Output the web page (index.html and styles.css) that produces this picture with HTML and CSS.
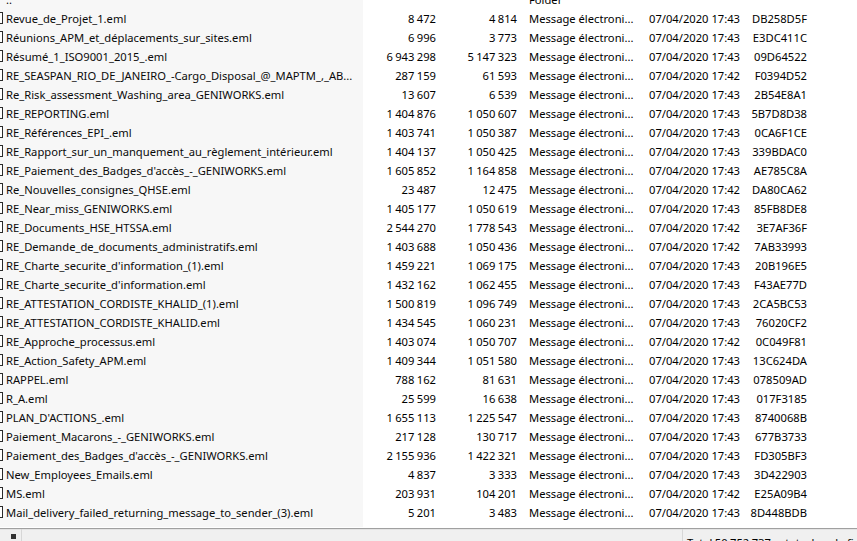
FILE: index.html
```html
<!DOCTYPE html>
<html lang="fr">
<head>
<meta charset="utf-8">
<title>Archive</title>
<link rel="stylesheet" href="styles.css">
</head>
<body>
<div class="window">
  <div class="list">
    <div class="row up"><span class="name"><svg class="folder" width="5" height="6" viewBox="0 0 5 6"><rect x="0" y="0" width="4" height="5" fill="#e8b83a"/></svg>..</span><span class="num"></span><span class="num"></span><span class="txt">Folder</span><span class="txt"></span><span class="crc"></span></div>
    <div class="row"><span class="name"><i class="file"></i>Revue_de_Projet_1.eml</span><span class="num">8 472</span><span class="num">4 814</span><span class="txt">Message électroni...</span><span class="txt">07/04/2020 17:43</span><span class="crc">DB258D5F</span></div>
    <div class="row"><span class="name"><i class="file"></i>Réunions_APM_et_déplacements_sur_sites.eml</span><span class="num">6 996</span><span class="num">3 773</span><span class="txt">Message électroni...</span><span class="txt">07/04/2020 17:43</span><span class="crc">E3DC411C</span></div>
    <div class="row"><span class="name"><i class="file"></i>Résumé_1_ISO9001_2015_.eml</span><span class="num">6 943 298</span><span class="num">5 147 323</span><span class="txt">Message électroni...</span><span class="txt">07/04/2020 17:43</span><span class="crc">09D64522</span></div>
    <div class="row"><span class="name"><i class="file"></i>RE_SEASPAN_RIO_DE_JANEIRO_-Cargo_Disposal_@_MAPTM_,_AB...</span><span class="num">287 159</span><span class="num">61 593</span><span class="txt">Message électroni...</span><span class="txt">07/04/2020 17:42</span><span class="crc">F0394D52</span></div>
    <div class="row"><span class="name"><i class="file"></i>Re_Risk_assessment_Washing_area_GENIWORKS.eml</span><span class="num">13 607</span><span class="num">6 539</span><span class="txt">Message électroni...</span><span class="txt">07/04/2020 17:43</span><span class="crc">2B54E8A1</span></div>
    <div class="row"><span class="name"><i class="file"></i>RE_REPORTING.eml</span><span class="num">1 404 876</span><span class="num">1 050 607</span><span class="txt">Message électroni...</span><span class="txt">07/04/2020 17:43</span><span class="crc">5B7D8D38</span></div>
    <div class="row"><span class="name"><i class="file"></i>RE_Références_EPI_.eml</span><span class="num">1 403 741</span><span class="num">1 050 387</span><span class="txt">Message électroni...</span><span class="txt">07/04/2020 17:43</span><span class="crc">0CA6F1CE</span></div>
    <div class="row"><span class="name"><i class="file"></i>RE_Rapport_sur_un_manquement_au_règlement_intérieur.eml</span><span class="num">1 404 137</span><span class="num">1 050 425</span><span class="txt">Message électroni...</span><span class="txt">07/04/2020 17:43</span><span class="crc">339BDAC0</span></div>
    <div class="row"><span class="name"><i class="file"></i>RE_Paiement_des_Badges_d'accès_-_GENIWORKS.eml</span><span class="num">1 605 852</span><span class="num">1 164 858</span><span class="txt">Message électroni...</span><span class="txt">07/04/2020 17:43</span><span class="crc">AE785C8A</span></div>
    <div class="row"><span class="name"><i class="file"></i>Re_Nouvelles_consignes_QHSE.eml</span><span class="num">23 487</span><span class="num">12 475</span><span class="txt">Message électroni...</span><span class="txt">07/04/2020 17:42</span><span class="crc">DA80CA62</span></div>
    <div class="row"><span class="name"><i class="file"></i>RE_Near_miss_GENIWORKS.eml</span><span class="num">1 405 177</span><span class="num">1 050 619</span><span class="txt">Message électroni...</span><span class="txt">07/04/2020 17:43</span><span class="crc">85FB8DE8</span></div>
    <div class="row"><span class="name"><i class="file"></i>RE_Documents_HSE_HTSSA.eml</span><span class="num">2 544 270</span><span class="num">1 778 543</span><span class="txt">Message électroni...</span><span class="txt">07/04/2020 17:42</span><span class="crc">3E7AF36F</span></div>
    <div class="row"><span class="name"><i class="file"></i>RE_Demande_de_documents_administratifs.eml</span><span class="num">1 403 688</span><span class="num">1 050 436</span><span class="txt">Message électroni...</span><span class="txt">07/04/2020 17:42</span><span class="crc">7AB33993</span></div>
    <div class="row"><span class="name"><i class="file"></i>RE_Charte_securite_d'information_(1).eml</span><span class="num">1 459 221</span><span class="num">1 069 175</span><span class="txt">Message électroni...</span><span class="txt">07/04/2020 17:43</span><span class="crc">20B196E5</span></div>
    <div class="row"><span class="name"><i class="file"></i>RE_Charte_securite_d'information.eml</span><span class="num">1 432 162</span><span class="num">1 062 455</span><span class="txt">Message électroni...</span><span class="txt">07/04/2020 17:43</span><span class="crc">F43AE77D</span></div>
    <div class="row"><span class="name"><i class="file"></i>RE_ATTESTATION_CORDISTE_KHALID_(1).eml</span><span class="num">1 500 819</span><span class="num">1 096 749</span><span class="txt">Message électroni...</span><span class="txt">07/04/2020 17:43</span><span class="crc">2CA5BC53</span></div>
    <div class="row"><span class="name"><i class="file"></i>RE_ATTESTATION_CORDISTE_KHALID.eml</span><span class="num">1 434 545</span><span class="num">1 060 231</span><span class="txt">Message électroni...</span><span class="txt">07/04/2020 17:43</span><span class="crc">76020CF2</span></div>
    <div class="row"><span class="name"><i class="file"></i>RE_Approche_processus.eml</span><span class="num">1 403 074</span><span class="num">1 050 707</span><span class="txt">Message électroni...</span><span class="txt">07/04/2020 17:42</span><span class="crc">0C049F81</span></div>
    <div class="row"><span class="name"><i class="file"></i>RE_Action_Safety_APM.eml</span><span class="num">1 409 344</span><span class="num">1 051 580</span><span class="txt">Message électroni...</span><span class="txt">07/04/2020 17:43</span><span class="crc">13C624DA</span></div>
    <div class="row"><span class="name"><i class="file"></i>RAPPEL.eml</span><span class="num">788 162</span><span class="num">81 631</span><span class="txt">Message électroni...</span><span class="txt">07/04/2020 17:43</span><span class="crc">078509AD</span></div>
    <div class="row"><span class="name"><i class="file"></i>R_A.eml</span><span class="num">25 599</span><span class="num">16 638</span><span class="txt">Message électroni...</span><span class="txt">07/04/2020 17:43</span><span class="crc">017F3185</span></div>
    <div class="row"><span class="name"><i class="file"></i>PLAN_D'ACTIONS_.eml</span><span class="num">1 655 113</span><span class="num">1 225 547</span><span class="txt">Message électroni...</span><span class="txt">07/04/2020 17:43</span><span class="crc">8740068B</span></div>
    <div class="row"><span class="name"><i class="file"></i>Paiement_Macarons_-_GENIWORKS.eml</span><span class="num">217 128</span><span class="num">130 717</span><span class="txt">Message électroni...</span><span class="txt">07/04/2020 17:43</span><span class="crc">677B3733</span></div>
    <div class="row"><span class="name"><i class="file"></i>Paiement_des_Badges_d'accès_-_GENIWORKS.eml</span><span class="num">2 155 936</span><span class="num">1 422 321</span><span class="txt">Message électroni...</span><span class="txt">07/04/2020 17:43</span><span class="crc">FD305BF3</span></div>
    <div class="row"><span class="name"><i class="file"></i>New_Employees_Emails.eml</span><span class="num">4 837</span><span class="num">3 333</span><span class="txt">Message électroni...</span><span class="txt">07/04/2020 17:43</span><span class="crc">3D422903</span></div>
    <div class="row"><span class="name"><i class="file"></i>MS.eml</span><span class="num">203 931</span><span class="num">104 201</span><span class="txt">Message électroni...</span><span class="txt">07/04/2020 17:42</span><span class="crc">E25A09B4</span></div>
    <div class="row"><span class="name"><i class="file"></i>Mail_delivery_failed_returning_message_to_sender_(3).eml</span><span class="num">5 201</span><span class="num">3 483</span><span class="txt">Message électroni...</span><span class="txt">07/04/2020 17:43</span><span class="crc">8D448BDB</span></div>
    <div class="row filler"><span class="name"></span></div>
  </div>
  <div class="status">
    <div class="cell first"><i class="sicon"></i></div>
    <div class="cell mid"></div>
    <div class="cell last">Total 50 752 737 octets dans le fichier</div>
  </div>
</div>
</body>
</html>
```

FILE: styles.css
```css
html, body {
  margin: 0;
  padding: 0;
  background: #ffffff;
}
.window {
  width: 857px;
  height: 541px;
  overflow: hidden;
  display: flex;
  flex-direction: column;
  font-family: "Noto Sans", "Open Sans", sans-serif;
  font-size: 11.2px;
  color: #000;
}
.list {
  height: 527px;
  overflow: hidden;
  flex: none;
  background: #fff;
}
.row {
  display: grid;
  grid-template-columns: 363px 77px 81px 120px 108px 62px 1fr;
  height: 19px;
  line-height: 19px;
  white-space: nowrap;
}
.row.up {
  margin-top: -10px;
}
.row.filler {
  height: 40px;
}
.name {
  background: #f7f7f7;
  padding-left: 6px;
  position: relative;
  overflow: hidden;
  color: #0a0a0a;
}
.file {
  position: absolute;
  left: -6px;
  top: 3px;
  width: 9px;
  height: 12px;
  border: 1px solid #2a2a2a;
  background: #fff;
  box-sizing: border-box;
}
.folder {
  position: absolute;
  left: 0;
  top: 3px;
}
.num {
  text-align: right;
  padding-right: 4px;
  word-spacing: -0.5px;
}
.txt {
  padding-left: 8px;
  overflow: hidden;
}
.crc {
  text-align: right;
  padding-right: 4px;
}
.status {
  flex: none;
  height: 22px;
  border-top: 1px solid #a0a0a0;
  box-shadow: inset 0 1px 0 #e3e3e3;
  margin-top: 1px;
  background: #f0f0f0;
  display: flex;
}
.status .cell {
  flex: none;
  height: 100%;
  padding-top: 6px;
  box-sizing: border-box;
  white-space: nowrap;
  line-height: 16px;
}
.status .first {
  width: 22px;
  border-right: 1px solid #d7d7d7;
  position: relative;
}
.sicon {
  position: absolute;
  left: 11px;
  top: 5px;
  width: 5px;
  height: 5px;
  background: #333;
}
.status .mid {
  width: 661px;
  border-right: 1px solid #d7d7d7;
}
.status .last {
  padding-left: 4px;
  word-spacing: -0.5px;
}
```
